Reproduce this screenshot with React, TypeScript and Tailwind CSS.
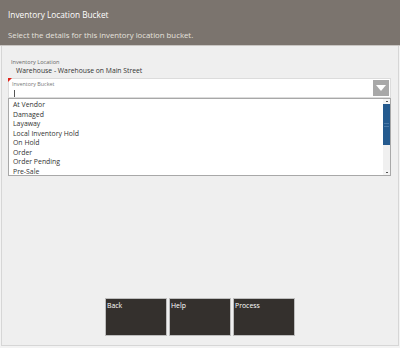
import { useState } from 'react';

const buckets = ['At Vendor', 'Damaged', 'Layaway', 'Local Inventory Hold', 'On Hold', 'Order', 'Order Pending', 'Pre-Sale'];

export default function App() {
  const [selected, setSelected] = useState<string | null>(null);

  return (
    <div className="w-[400px] h-[348px] bg-[#f3f3f3] font-['Open_Sans',sans-serif] overflow-hidden flex flex-col">
      {/* Header */}
      <header className="h-[46px] bg-[#7b746e] border-b border-[#c9c6c3] px-[8px] pt-[8px] flex flex-col">
        <h1 className="text-[8.3px] leading-[14px] text-white">Inventory Location Bucket</h1>
        <p className="mt-[6px] text-[7.8px] leading-[14px] text-[#e6e2de]">Select the details for this inventory location bucket.</p>
      </header>

      {/* Body */}
      <div className="flex-1 mx-[1px] mb-[2px] border-x border-b border-[#d6d6d6] bg-[#efefef] flex flex-col">
        <div className="pl-[9px] pt-[12px]">
          <p className="text-[5.6px] leading-[8px] text-[#666]">Inventory Location</p>
          <p className="pl-[5px] text-[6.8px] leading-[10px] text-[#333]">Warehouse - Warehouse on Main Street</p>
        </div>

        <div className="mt-[2px] mx-[6px] w-[383px]">
          {/* Input */}
          <div className="relative h-[20px] bg-white border border-[#dcdcdc] flex">
            <div className="absolute -left-px -top-px w-0 h-0 border-t-[4px] border-r-[4px] border-t-[#e0241b] border-r-transparent" />
            <div className="flex-1 pl-[3px] pt-[2px]">
              <p className="text-[5.4px] leading-[7px] text-[#777]">Inventory Bucket</p>
              <div className="mt-[2px] ml-[2px] w-px h-[7px] bg-[#555]" />
            </div>
            <button className="w-[16px] h-[16px] mt-[1px] mr-[1px] bg-[#a8a8a8] flex items-center justify-center">
              <svg width="10" height="6" viewBox="0 0 10 6">
                <path d="M0 0 L10 0 L5 6 Z" fill="#fff" />
              </svg>
            </button>
          </div>

          {/* List */}
          <div className="h-[78px] bg-white border border-[#a8a8a8] flex">
            <ul className="flex-1 pl-[4px] pt-[1px]">
              {buckets.map((b) => (
                <li
                  key={b}
                  onClick={() => setSelected(b)}
                  className={`h-[9.5px] text-[6.9px] leading-[9.5px] text-[#333] cursor-pointer ${selected === b ? 'bg-[#dde7f2]' : ''}`}
                >
                  {b}
                </li>
              ))}
            </ul>
            <div className="w-[7px] flex flex-col bg-[#e8e8e8]">
              <div className="h-[5px] bg-[#f4f4f4] flex items-center justify-center">
                <div className="w-[2px] h-[1px] bg-[#555]" />
              </div>
              <div className="h-[41px] bg-[#245a8e] flex flex-col items-center justify-center gap-[2px]">
                <div className="w-[5px] h-px bg-[#4a78a6]" />
                <div className="w-[5px] h-px bg-[#4a78a6]" />
              </div>
              <div className="flex-1 bg-[#f0f0f0]" />
              <div className="h-[5px] bg-[#f4f4f4] flex items-center justify-center">
                <div className="w-[2px] h-[1px] bg-[#555]" />
              </div>
            </div>
          </div>
        </div>

        <div className="flex-1" />

        {/* Buttons */}
        <div className="flex justify-center gap-[2px] mb-[9px]">
          {['Back', 'Help', 'Process'].map((label) => (
            <button
              key={label}
              className="w-[62px] h-[38px] bg-[#34302d] border border-[#bdbdbd] text-left px-[1px] pt-[2px] flex flex-col"
            >
              <span className="text-[6.9px] leading-[10px] text-white">{label}</span>
            </button>
          ))}
        </div>
      </div>
    </div>
  );
}
